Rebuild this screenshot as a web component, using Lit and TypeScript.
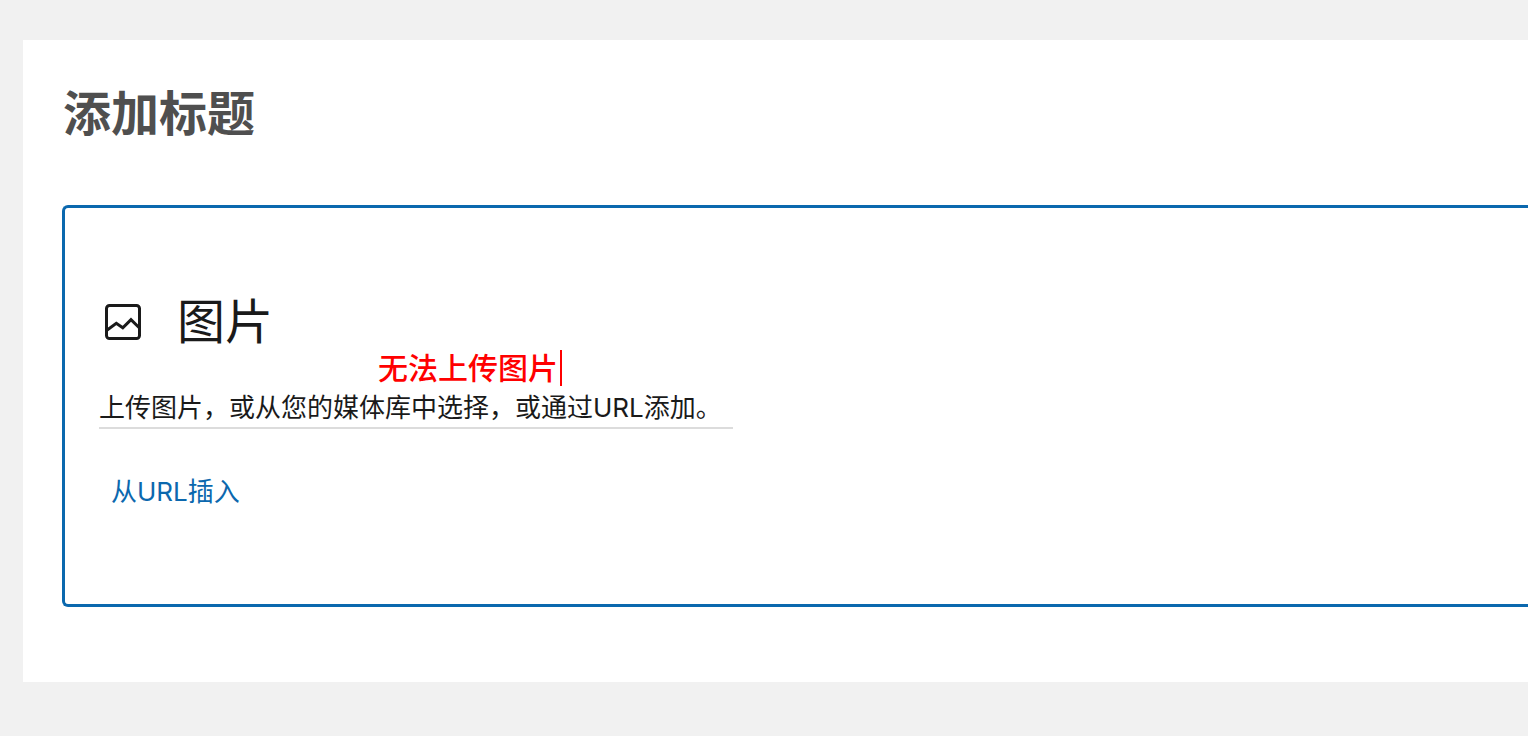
import { LitElement, html, css } from "lit";
import { customElement } from "lit/decorators.js";

@customElement("image-placeholder")
export class ImagePlaceholder extends LitElement {
  static styles = css`
    :host {
      display: block;
    }
    .block {
      position: relative;
      box-sizing: border-box;
      min-height: 402px;
      padding: 80px 34px 72px;
      border: 3px solid #0b68ae;
      border-right: 0;
      border-radius: 6px 0 0 6px;
      color: #1a1a1a;
    }
    .label {
      display: flex;
      align-items: center;
      gap: 30px;
      margin: 0;
      font-size: 48px;
      line-height: 68px;
      font-weight: 400;
    }
    .icon {
      flex: none;
      width: 48px;
      height: 48px;
      fill: none;
      stroke: currentColor;
      stroke-width: 3;
      stroke-linejoin: round;
    }
    .notice {
      position: absolute;
      top: 142px;
      left: 313px;
      margin: 0;
      padding-right: 2px;
      border-right: 2px solid #f00;
      color: #f00;
      font-size: 30px;
      line-height: 36px;
      font-weight: 500;
    }
    .instructions {
      width: fit-content;
      margin: 32px 0 0;
      padding: 0 11px 0 0;
      border-bottom: 2px solid #dcdcdc;
      font-size: 26px;
      line-height: 39px;
    }
    .insert {
      margin: 43px 0 0;
      padding: 0 12px;
      border: 0;
      background: none;
      color: #0b68ae;
      font: inherit;
      font-size: 26px;
      line-height: 40px;
      cursor: pointer;
    }
  `;

  render() {
    return html`
      <section class="block" aria-labelledby="label">
        <h2 class="label">
          <svg class="icon" viewBox="0 0 48 48" aria-hidden="true">
            <rect x="7.5" y="7.5" width="33" height="33" rx="3" />
            <path d="M7.5 32.5 17.3 25.3 23.8 29.8 32 21.6 40.5 30" stroke-linejoin="miter" />
          </svg>
          <span id="label">图片</span>
        </h2>
        <p class="notice">无法上传图片</p>
        <p class="instructions">上传图片，或从您的媒体库中选择，或通过URL添加。</p>
        <button class="insert" type="button">从URL插入</button>
      </section>
    `;
  }
}

@customElement("app-root")
export class AppRoot extends LitElement {
  static styles = css`
    :host {
      display: block;
      box-sizing: border-box;
      min-height: 100vh;
      padding: 40px 0 54px 23px;
      background: #f1f1f1;
      font-family: Inter, "Noto Sans CJK SC", sans-serif;
    }
    .editor {
      padding: 37px 0 75px 39px;
      background: #fff;
    }
    .title {
      display: block;
      box-sizing: border-box;
      width: 100%;
      height: 72px;
      margin: 0 0 56px;
      padding: 0 1px;
      border: 0;
      outline: 0;
      background: none;
      color: #4f4f4f;
      font: inherit;
      font-size: 48px;
      font-weight: 700;
    }
    .title::placeholder {
      color: #4f4f4f;
      opacity: 1;
    }
  `;

  render() {
    return html`
      <main class="editor">
        <input class="title" type="text" aria-label="添加标题" placeholder="添加标题" />
        <image-placeholder></image-placeholder>
      </main>
    `;
  }
}
